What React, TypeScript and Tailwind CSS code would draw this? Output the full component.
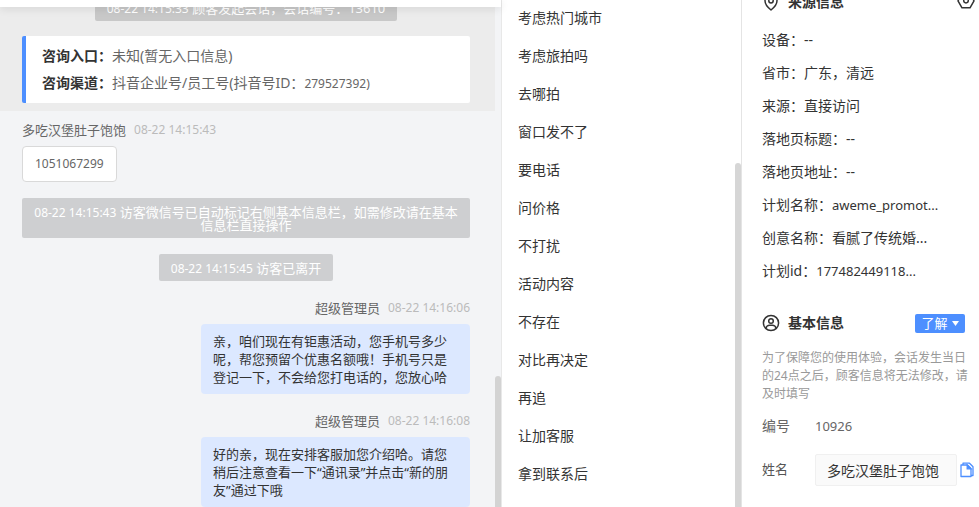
import type { ReactNode } from "react";

const quickReplies = [
  "考虑热门城市",
  "考虑旅拍吗",
  "去哪拍",
  "窗口发不了",
  "要电话",
  "问价格",
  "不打扰",
  "活动内容",
  "不存在",
  "对比再决定",
  "再追",
  "让加客服",
  "拿到联系后",
];

const sourceInfo: { label: string; value: string; latin?: boolean }[] = [
  { label: "设备", value: "--" },
  { label: "省市", value: "广东，清远" },
  { label: "来源", value: "直接访问" },
  { label: "落地页标题", value: "--" },
  { label: "落地页地址", value: "--" },
  { label: "计划名称", value: "aweme_promot...", latin: true },
  { label: "创意名称", value: "看腻了传统婚..." },
  { label: "计划id", value: "177482449118...", latin: true },
];

function Notice({ time, children }: { time: string; children: ReactNode }) {
  return (
    <p className="mx-auto w-fit rounded-xs bg-black/15 px-3 pt-2 pb-1.5 text-center text-[13px] leading-[13px] text-white">
      <time className="text-xs leading-[13px]">{time}</time> {children}
    </p>
  );
}

function Meta({ name, time }: { name: string; time: string }) {
  return (
    <div className="flex items-center gap-2 text-[13px] leading-4 text-[#666]">
      <span>{name}</span>
      <time className="text-xs leading-4 text-[#bbb]">{time}</time>
    </div>
  );
}

function AgentMessage({ time, children }: { time: string; children: ReactNode }) {
  return (
    <article className="flex flex-col items-end gap-2">
      <Meta name="超级管理员" time={time} />
      <p className="w-[269px] rounded bg-[#dce8ff] px-3 py-2 text-[13px] leading-[18px] text-[#333]">{children}</p>
    </article>
  );
}

function PinIcon() {
  return (
    <svg width="18" height="18" viewBox="0 0 18 18" fill="none" stroke="#333" strokeWidth="1.5" aria-hidden="true">
      <path d="M9 17c3.600-2.800 6-5.800 6-9.200A6 6 0 0 0 3 7.800C3 11.200 5.400 14.200 9 17z" strokeLinejoin="round" />
      <circle cx="9" cy="7.800" r="2.200" />
    </svg>
  );
}

function HexIcon() {
  return (
    <svg width="18" height="18" viewBox="0 0 18 18" fill="none" stroke="#333" strokeWidth="1.5" aria-hidden="true">
      <path d="M5 0.800h8L17 7.800l-4 7H5l-4-7z" strokeLinejoin="round" />
      <circle cx="9" cy="7.600" r="2.300" />
    </svg>
  );
}

function UserIcon() {
  return (
    <svg width="18" height="18" viewBox="0 0 18 18" fill="none" stroke="#333" strokeWidth="1.5" aria-hidden="true">
      <circle cx="9" cy="9" r="7.600" />
      <circle cx="9" cy="7" r="2.300" />
      <path d="M3.900 14.200c.5-2 2-3 3.700-3h2.800c1.700 0 3.200 1 3.700 3" />
    </svg>
  );
}

function CopyIcon() {
  return (
    <svg width="14" height="16" viewBox="0 0 14 16" fill="none" stroke="#4d8fff" strokeWidth="1.3" aria-hidden="true">
      <path d="M3 3V1.200h6.500L13 4.700v8.800h-2" strokeLinejoin="round" />
      <path d="M1 3h6.500L11 6.500v8H1z" strokeLinejoin="round" />
      <path d="M7.200 3v3.800H11z" fill="#4d8fff" />
    </svg>
  );
}

export default function App() {
  return (
    <main className="flex h-screen overflow-hidden bg-white font-['Noto_Sans','Noto_Sans_CJK_SC',sans-serif] text-[#333]">
      <section className="flex min-w-0 flex-1 flex-col border-r border-[#e8e8e8] bg-[#f3f4f6]">
        <header className="relative z-10 h-[7px] shrink-0 bg-white shadow-[0_2px_8px_rgba(0,0,0,0.1)]" />
        <div className="flex min-h-0 flex-1">
          <div className="min-w-0 flex-1 overflow-hidden">
            <div className="-mt-[13px] bg-[#ececec] pr-[25px] pb-2 pl-[22px]">
              <Notice time="08-22 14:15:33">顾客发起会话，会话编号：13610</Notice>
              <dl className="mt-[15px] rounded-xs border-l-4 border-[#4d8fff] bg-white pt-1.5 pb-[7px] pl-4 text-sm leading-[27px]">
                <div className="flex">
                  <dt className="font-bold">咨询入口：</dt>
                  <dd className="text-[#666]">未知(暂无入口信息)</dd>
                </div>
                <div className="flex">
                  <dt className="font-bold">咨询渠道：</dt>
                  <dd className="text-[#666]">
                    抖音企业号/员工号(抖音号ID：<span className="text-xs">279527392)</span>
                  </dd>
                </div>
              </dl>
            </div>
            <div className="flex flex-col pt-[11px] pr-[25px] pl-[22px]">
              <Meta name="多吃汉堡肚子饱饱" time="08-22 14:15:43" />
              <p className="mt-2 w-fit rounded border border-[#d9d9d9] bg-white px-3 py-2 text-xs leading-[18px] text-[#666]">
                1051067299
              </p>
              <div className="mt-4">
                <Notice time="08-22 14:15:43">访客微信号已自动标记右侧基本信息栏，如需修改请在基本信息栏直接操作</Notice>
              </div>
              <div className="mt-4">
                <Notice time="08-22 14:15:45">访客已离开</Notice>
              </div>
              <div className="mt-[19px] flex flex-col gap-[19px]">
                <AgentMessage time="08-22 14:16:06">
                  亲，咱们现在有钜惠活动，您手机号多少呢，帮您预留个优惠名额哦！手机号只是登记一下，不会给您打电话的，您放心哈
                </AgentMessage>
                <AgentMessage time="08-22 14:16:08">
                  好的亲，现在安排客服加您介绍哈。请您稍后注意查看一下“通讯录”并点击“新的朋友”通过下哦
                </AgentMessage>
              </div>
            </div>
          </div>
          <div className="flex w-1.5 flex-col justify-end">
            <div className="h-[131px] rounded-t-full bg-[#d3d3d3]" />
          </div>
        </div>
      </section>

      <section className="flex w-[240px] shrink-0 border-r border-[#e4e4e4]">
        <ul className="-mt-px flex-1 pl-4 text-sm leading-[38px]">
          {quickReplies.map((reply) => (
            <li key={reply}>{reply}</li>
          ))}
        </ul>
        <div className="flex w-1.5 flex-col justify-end">
          <div className="h-[344px] rounded-t-full bg-[#d6d6d6]" />
        </div>
      </section>

      <aside className="w-[237px] shrink-0 pl-5">
        <div className="-mt-5 flex h-[43px] items-center gap-2 pr-1">
          <PinIcon />
          <h2 className="flex-1 text-sm font-bold">来源信息</h2>
          <button type="button" aria-label="设置">
            <HexIcon />
          </button>
        </div>
        <dl className="text-sm leading-[33px]">
          {sourceInfo.map(({ label, value, latin }) => (
            <div key={label} className="flex h-[33px] items-baseline">
              <dt>{label}：</dt>
              <dd className={latin ? "text-[13px] leading-[33px]" : "text-sm leading-[33px]"}>{value}</dd>
            </div>
          ))}
        </dl>
        <div className="mt-4 flex h-10 items-center gap-2 pr-[14px]">
          <UserIcon />
          <h2 className="flex-1 text-sm font-bold">基本信息</h2>
          <button
            type="button"
            className="flex h-[19px] w-[50px] items-center justify-center gap-1 rounded-xs bg-[#4d8fff] text-[13px] leading-[19px] text-white"
          >
            了解
            <svg width="7" height="5" viewBox="0 0 7 5" fill="currentColor" aria-hidden="true">
              <path d="M0 0h7L3.500 5z" />
            </svg>
          </button>
        </div>
        <p className="mt-1.5 pr-[10px] text-xs leading-[18px] text-[#999]">
          为了保障您的使用体验，会话发生当日的24点之后，顾客信息将无法修改，请及时填写
        </p>
        <div className="mt-[14px] flex text-sm leading-[18px] text-[#666]">
          <span className="w-[53px]">编号</span>
          <span className="text-[13px] leading-[18px]">10926</span>
        </div>
        <div className="mt-[19px] flex items-center pr-[5px]">
          <label htmlFor="customer-name" className="w-[53px] text-[13px] text-[#555]">
            姓名
          </label>
          <input
            id="customer-name"
            type="text"
            defaultValue="多吃汉堡肚子饱饱"
            className="h-8 min-w-0 flex-1 rounded-xs border border-[#f0f0f0] bg-[#fafafa] px-[11px] text-sm"
          />
          <button type="button" aria-label="复制姓名" className="ml-[3px]">
            <CopyIcon />
          </button>
        </div>
      </aside>
    </main>
  );
}
